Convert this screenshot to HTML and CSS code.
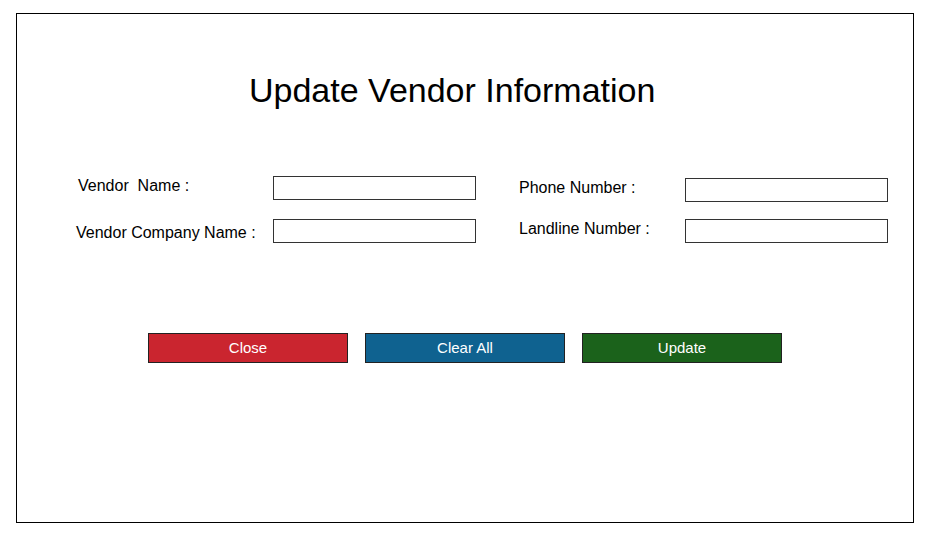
FILE: index.html
```html
<!DOCTYPE html>
<html lang="en">
<head>
<meta charset="utf-8">
<title>Update Vendor Information</title>
<link rel="stylesheet" href="styles.css">
</head>
<body>
<div class="frame">
  <h1 class="title">Update Vendor Information</h1>
  <div class="form">
    <div class="col col-left">
      <label class="lbl lbl-a">Vendor&nbsp; Name :</label>
      <input class="field" type="text">
      <label class="lbl lbl-b">Vendor Company Name :</label>
      <input class="field" type="text">
    </div>
    <div class="col col-right">
      <label class="lbl lbl-c">Phone Number :</label>
      <input class="field" type="text">
      <label class="lbl lbl-c">Landline Number :</label>
      <input class="field" type="text">
    </div>
  </div>
  <div class="actions">
    <button class="btn btn-close" type="button">Close</button>
    <button class="btn btn-clear" type="button">Clear All</button>
    <button class="btn btn-update" type="button">Update</button>
  </div>
</div>
</body>
</html>
```
FILE: styles.css
```css
html, body {
  margin: 0;
  padding: 0;
  background: #fff;
}

body {
  font-family: "Liberation Sans", Arial, sans-serif;
  color: #000;
}

.frame {
  margin: 13px 0 0 16px;
  width: 898px;
  height: 510px;
  box-sizing: border-box;
  border: 1px solid #000;
  background: #fff;
}

.title {
  margin: 0;
  padding: 56px 0 0 232px;
  font-size: 34px;
  font-weight: 400;
  line-height: 40px;
  color: #000;
}

.form {
  display: flex;
  margin-top: 66px;
  padding-left: 59px;
}

.col {
  display: grid;
  grid-auto-rows: 25px;
  align-items: start;
}

.col-left {
  grid-template-columns: 197px 203px;
  row-gap: 18px;
}

.col-right {
  grid-template-columns: 166px 203px;
  row-gap: 16px;
  margin-top: 2px;
  margin-left: 43px;
}

.lbl {
  font-size: 16px;
  line-height: 18px;
  white-space: nowrap;
}

.lbl-a { margin-top: 1px; margin-left: 2px; }
.lbl-b { margin-top: 5px; }
.lbl-c { margin-top: 1px; }

.field {
  box-sizing: border-box;
  width: 203px;
  height: 24px;
  margin: 0;
  padding: 0;
  border: 1px solid #333;
  border-radius: 0;
  background: #fff;
  outline: none;
}

.col-left .field + .lbl,
.col-right .field + .lbl {
  margin-top: 5px;
}

.col-right .field + .lbl {
  margin-top: 1px;
}

.actions {
  display: flex;
  gap: 17px;
  margin-top: 89px;
  padding-left: 131px;
}

.btn {
  box-sizing: border-box;
  width: 200px;
  height: 30px;
  margin: 0;
  padding: 0 0 2px;
  border: 1px solid #222;
  border-radius: 0;
  color: #fff;
  font-family: "Liberation Sans", Arial, sans-serif;
  font-size: 15px;
  cursor: pointer;
}

.btn-close { background: #ca252f; }
.btn-clear { background: #0f6290; }
.btn-update { background: #1b621b; }
```
